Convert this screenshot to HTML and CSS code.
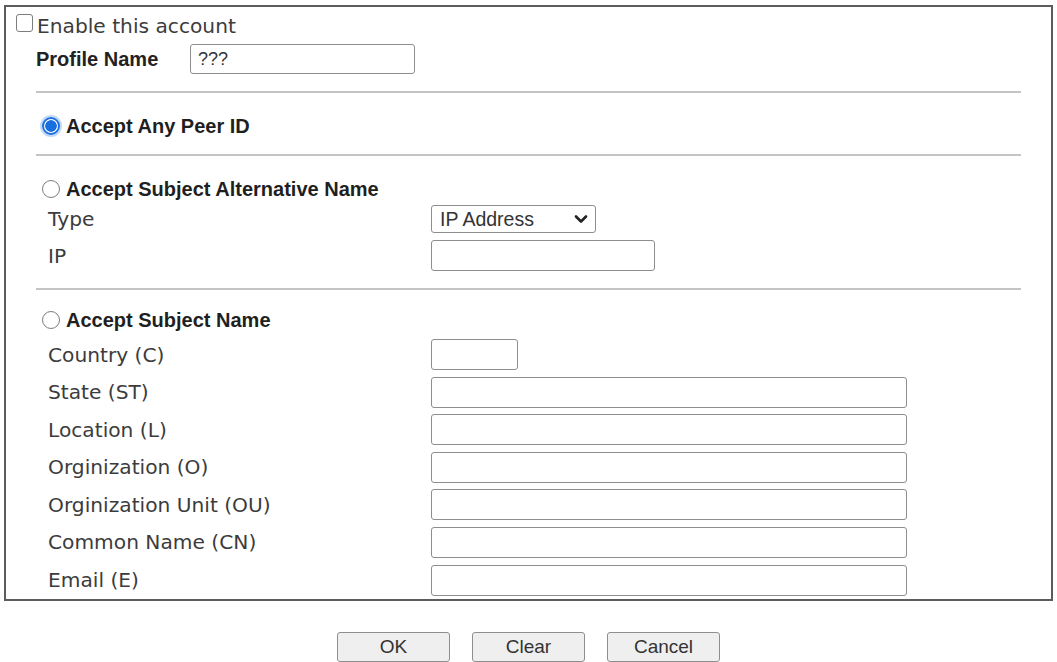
FILE: index.html
```html
<!DOCTYPE html>
<html lang="en">

<head>
    <meta charset="UTF-8">
    <meta name="viewport" content="width=device-width, initial-scale=1.0">
    <title>Peer ID</title>

    <link rel="stylesheet" href="styles.css">
</head>

<body>

<div class="page">
    <form class="frame" id="peerForm">
        <div class="enable">
            <input type="checkbox" class="check" id="enable">
            <label for="enable">Enable this account</label>
        </div>

        <div class="profile">
            <label for="profile">Profile Name</label>
            <input type="text" id="profile" class="field profile-field" value="???">
        </div>

        <div class="rule rule-first"></div>

        <div class="option option-peer">
            <input type="radio" class="radio" name="peer" id="anyPeer" checked>
            <label for="anyPeer">Accept Any Peer ID</label>
        </div>

        <div class="rule"></div>

        <div class="option">
            <input type="radio" class="radio" name="peer" id="altName">
            <label for="altName">Accept Subject Alternative Name</label>
        </div>
        <div class="row row-type">
            <span>Type</span>
            <span class="select-wrap">
                <select class="select">
                    <option>IP Address</option>
                    <option>Domain Name</option>
                    <option>E-mail</option>
                </select>
                <svg class="chevron" width="14" height="10" viewBox="0 0 14 10">
                    <path d="M2 2.5 L7 7.5 L12 2.5" fill="none" stroke="#222" stroke-width="2.6" stroke-linecap="round" stroke-linejoin="round"/>
                </svg>
            </span>
        </div>
        <div class="row row-ip">
            <span>IP</span>
            <input type="text" class="field ip-field">
        </div>

        <div class="rule rule-third"></div>

        <div class="option option-subject">
            <input type="radio" class="radio" name="peer" id="subjName">
            <label for="subjName">Accept Subject Name</label>
        </div>
        <div class="subject">
            <div class="row">
                <span>Country (C)</span>
                <input type="text" class="field short-field">
            </div>
            <div class="row">
                <span>State (ST)</span>
                <input type="text" class="field long-field">
            </div>
            <div class="row">
                <span>Location (L)</span>
                <input type="text" class="field long-field">
            </div>
            <div class="row">
                <span>Orginization (O)</span>
                <input type="text" class="field long-field">
            </div>
            <div class="row">
                <span>Orginization Unit (OU)</span>
                <input type="text" class="field long-field">
            </div>
            <div class="row">
                <span>Common Name (CN)</span>
                <input type="text" class="field long-field">
            </div>
            <div class="row">
                <span>Email (E)</span>
                <input type="text" class="field long-field">
            </div>
        </div>
    </form>

    <div class="buttons">
        <button type="button">OK</button>
        <button type="button" onclick="document.getElementById('peerForm').reset()">Clear</button>
        <button type="button">Cancel</button>
    </div>
</div>

</body>
</html>
```

FILE: styles.css
```css
body {
    margin: 0;
    background: #ffffff;
    font-family: "DejaVu Sans", Verdana, sans-serif;
    font-size: 20.2px;
    color: #3c3c3c;
}

.page {
    padding: 5px 4px 0;
}

.frame {
    border: 2px solid #5c5c5c;
    padding: 0 0 3px;
    margin: 0;
}

/* top rows */

.enable {
    display: flex;
    align-items: center;
    height: 34px;
    padding-top: 2px;
    padding-left: 10px;
}

.check {
    appearance: none;
    width: 17px;
    height: 18px;
    margin: 0 4px 7px 0;
    border: 1.5px solid #7d7d7d;
    border-radius: 3px;
    background: #fff;
}

.profile {
    display: flex;
    align-items: center;
    height: 32px;
    padding-left: 30px;
    font-family: "Liberation Sans", Arial, sans-serif;
    font-size: 20px;
    font-weight: bold;
    color: #222;
}

.profile label {
    width: 154px;
}

.field {
    box-sizing: border-box;
    height: 31px;
    margin: 0;
    padding: 0 7px;
    border: 1px solid #8e8e8e;
    border-radius: 3px;
    background: #fff;
    font-family: "Liberation Sans", Arial, sans-serif;
    font-size: 18px;
    color: #333;
    outline: none;
}

.profile-field {
    width: 225px;
    height: 30px;
    font-weight: normal;
}

.rule {
    height: 2px;
    margin: 0 30px;
    background: #c4c4c4;
}

.rule-first {
    margin-top: 16px;
}

.rule-third {
    margin-top: 17px;
}

/* radio headings */

.option {
    display: flex;
    align-items: center;
    height: 28px;
    margin-top: 19px;
    padding-left: 36px;
    font-family: "Liberation Sans", Arial, sans-serif;
    font-size: 20px;
    font-weight: bold;
    color: #1f1f1f;
}

.option-peer {
    margin-bottom: 14px;
}

.option-subject {
    margin-top: 16px;
}

.radio {
    appearance: none;
    width: 18px;
    height: 18px;
    margin: 0 6px 0 0;
    border: 1.5px solid #7d7d7d;
    border-radius: 50%;
    background: #fff;
}

.radio:checked {
    border: 2px solid #1a6fe0;
    background: radial-gradient(circle, #1a6fe0 0 55%, #ffffff 62%);
    box-shadow: 0 0 0 2px rgba(120, 170, 240, 0.45);
}

/* field rows */

.row {
    display: grid;
    grid-template-columns: 383px auto;
    align-items: center;
    justify-items: start;
    height: 31px;
    padding-left: 42px;
}

.row-type {
    height: 30px;
    margin-top: 1px;
}

.row-ip {
    margin-top: 6px;
}

.select-wrap {
    position: relative;
    display: block;
    height: 28px;
}

.select {
    appearance: none;
    display: block;
    width: 165px;
    height: 28px;
    margin: 0;
    padding: 0 28px 0 8px;
    border: 1px solid #8e8e8e;
    border-radius: 3px;
    background: #fff;
    font-family: "Liberation Sans", Arial, sans-serif;
    font-size: 19.5px;
    color: #333;
}

.chevron {
    position: absolute;
    right: 8px;
    top: 9px;
    pointer-events: none;
}

.ip-field {
    width: 224px;
}

.subject {
    display: flex;
    flex-direction: column;
    gap: 6.6px;
    margin-top: 5px;
}

.short-field {
    width: 87px;
}

.long-field {
    width: 476px;
}

/* buttons */

.buttons {
    display: flex;
    justify-content: center;
    gap: 22px;
    margin-top: 31px;
}

button {
    width: 113px;
    height: 30px;
    border: 1px solid #8e8e8e;
    border-radius: 3px;
    background: #efefef;
    font-family: "Liberation Sans", Arial, sans-serif;
    font-size: 19px;
    color: #333;
    cursor: pointer;
}

button:hover {
    background: #e2e2e2;
}
```
